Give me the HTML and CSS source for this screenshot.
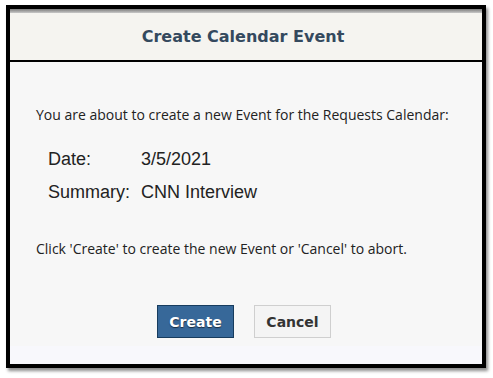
FILE: index.html
```html
<!DOCTYPE html>
<html>
<head>
<meta charset="utf-8">
<link rel="stylesheet" href="styles.css">
</head>
<body>
<div class="dialog">
  <div class="topstrip"></div>
  <div class="header"><h1 class="title">Create Calendar Event</h1></div>
  <div class="content">
    <p class="intro">You are about to create a new Event for the Requests Calendar:</p>
    <div class="details">
      <div class="label">Date:</div><div class="value">3/5/2021</div>
      <div class="label">Summary:</div><div class="value">CNN Interview</div>
    </div>
    <p class="note">Click 'Create' to create the new Event or 'Cancel' to abort.</p>
    <div class="actions">
      <button class="btn btn-primary">Create</button>
      <button class="btn btn-default">Cancel</button>
    </div>
  </div>
  <div class="footer"></div>
</div>
</body>
</html>
```

FILE: styles.css
```css
html, body { margin: 0; padding: 0; background: #ffffff; }
body { width: 493px; height: 378px; overflow: hidden; }
.dialog {
  box-sizing: border-box;
  margin: 5px 0 0 6px;
  width: 480px;
  height: 363px;
  border: 4px solid #000;
  box-shadow: 2px 3px 3px rgba(0,0,0,0.45);
  background: #f7f7f7;
  display: flex;
  flex-direction: column;
}
.topstrip { height: 4px; background: linear-gradient(#7a7a7a, #c8c8c8); }
.header {
  height: 47px;
  background: #f5f4f0;
  border-bottom: 2px solid #000;
  display: flex;
  align-items: center;
  justify-content: center;
  padding-right: 6px;
}
.title {
  margin: 0;
  font-family: "DejaVu Sans", Verdana, sans-serif;
  font-weight: bold;
  font-size: 16px;
  color: #34495e;
}
.content { flex: 1; padding: 0 0 0 26px; display: flex; flex-direction: column; }
.intro, .note {
  margin: 0;
  font-family: "Open Sans", sans-serif;
  font-size: 14px;
  line-height: 20px;
  color: #222;
}
.intro { margin-top: 43px; }
.details {
  display: grid;
  grid-template-columns: 93px auto;
  row-gap: 12px;
  margin: 24px 0 0 12px;
  font-family: "Liberation Sans", Arial, sans-serif;
  font-size: 18px;
  line-height: 21px;
  color: #222;
}
.note { margin-top: 36px; }
.actions {
  display: flex;
  gap: 20px;
  justify-content: center;
  margin: 46px 0 0 -30px;
}
.btn {
  box-sizing: border-box;
  height: 33px;
  width: 77px;
  font-family: "DejaVu Sans", Verdana, sans-serif;
  font-weight: bold;
  font-size: 14px;
  padding: 0;
}
.btn-primary {
  background: #376899;
  border: 1px solid #173c5e;
  color: #fff;
  text-shadow: 0 1px 1px #1b2d40;
}
.btn-default {
  background: #f4f4f4;
  border: 1px solid #cfcfcf;
  color: #333;
}
.footer { height: 18px; background: #f8f8fc; }
```
